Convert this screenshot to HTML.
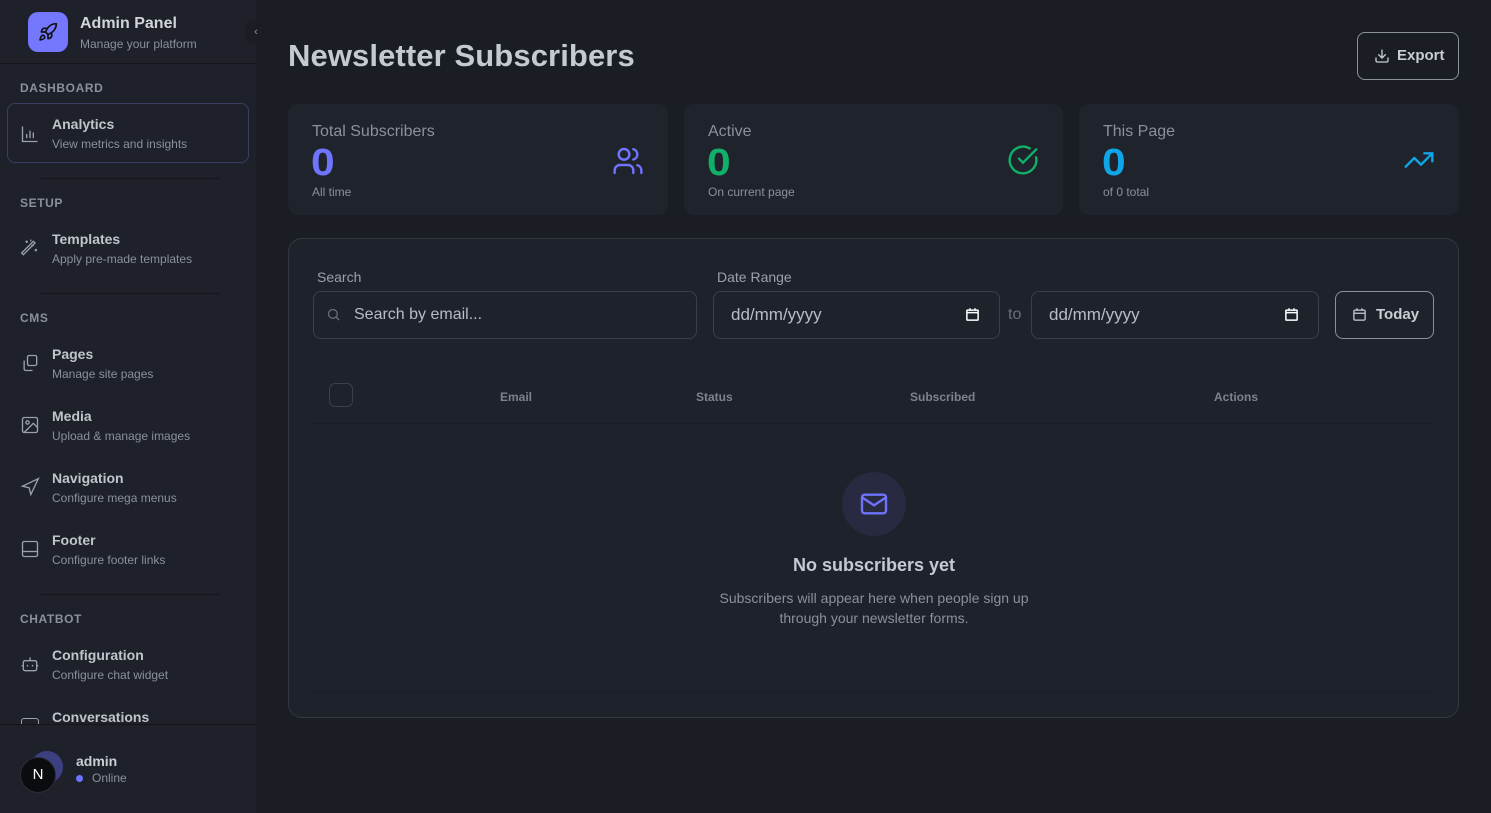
<!DOCTYPE html>
<html><head><meta charset="utf-8"><style>
*{box-sizing:border-box;margin:0;padding:0}
body{width:1491px;height:813px;overflow:hidden;background:#1a1d23;font-family:"Liberation Sans",sans-serif;position:relative;color:#d1d5db}
.a{position:absolute}
.sb{left:0;top:0;width:256px;height:813px;background:#1e2129}
.sec{font-size:12px;font-weight:bold;color:#8b909a;letter-spacing:.6px;left:20px}
.it{left:52px;font-size:14px;font-weight:bold;color:#c0c4cb}
.sub{left:52px;font-size:12px;color:#8b909a}
.ic{left:20px;width:20px;height:20px}
.card{background:#1f232b;border-radius:10px}
.lbl{font-size:16px;color:#8b909a}
.big{font-size:38px;font-weight:bold;transform:scaleX(1.12);transform-origin:left}
.sm{font-size:12px;color:#8b909a}
.inp{border:1px solid #3a3f48;border-radius:8px;background:#1e222a}
.th{font-size:12px;font-weight:bold;color:#7d828c;top:390px}
</style></head><body>
<div class="a sb"></div>
<div class="a" style="left:28px;top:12px;width:40px;height:40px;border-radius:10px;background:#7478ff"></div>
<svg class="a" style="left:38px;top:22px" width="20" height="20" viewBox="0 0 24 24" fill="none" stroke="#111" stroke-width="2" stroke-linecap="round" stroke-linejoin="round"><path d="M4.5 16.5c-1.5 1.26-2 5-2 5s3.74-.5 5-2c.71-.84.7-2.130-.09-2.91a2.18 2.18 0 0 0-2.91-.09z"/><path d="m12 15-3-3a22 22 0 0 1 2-3.95A12.88 12.88 0 0 1 22 2c0 2.72-.78 7.5-6 11a22.350 22.350 0 0 1-4 2z"/><path d="M9 12H4s.55-3.03 2-4c1.62-1.08 5 0 5 0M12 15v5s3.03-.55 4-2c1.08-1.62 0-5 0-5"/></svg>
<div class="a" style="left:80px;top:15px;font-size:16px;font-weight:bold;color:#d1d5db">Admin Panel</div>
<div class="a" style="left:80px;top:37px;font-size:12px;color:#8b909a">Manage your platform</div>
<div class="a" style="left:244px;top:20px;width:24px;height:24px;border-radius:12px;background:#1a1d23;color:#8b909a;font-size:11px;text-align:center;line-height:24px">‹</div>
<div class="a" style="left:0;top:63px;width:256px;height:1px;background:#14161b"></div>

<div class="a sec" style="top:81px">DASHBOARD</div>
<div class="a" style="left:7px;top:103px;width:242px;height:60px;border:1.5px solid #3a3d62;border-radius:8px"></div>
<svg class="a ic" style="top:124px" viewBox="0 0 24 24" fill="none" stroke="#9ca0a8" stroke-width="1.6"><path d="M3 3v18h18M8 17v-5M12 17V8M16 17v-7"/></svg>
<div class="a it" style="top:116px">Analytics</div><div class="a sub" style="top:137px">View metrics and insights</div>
<div class="a" style="left:40px;top:178px;width:180px;height:1px;background:#15171c"></div>

<div class="a sec" style="top:196px">SETUP</div>
<svg class="a ic" style="top:238px" viewBox="0 0 24 24" fill="none" stroke="#9ca0a8" stroke-width="1.6"><path d="M4 20 18 6l-2-2L2 18zM14 8l2 2M8 3v3M6.5 4.5h3M19 13v3M17.5 14.5h3M13 2v2"/></svg>
<div class="a it" style="top:231px">Templates</div><div class="a sub" style="top:252px">Apply pre-made templates</div>
<div class="a" style="left:40px;top:293px;width:180px;height:1px;background:#15171c"></div>

<div class="a sec" style="top:311px">CMS</div>
<svg class="a ic" style="top:353px" viewBox="0 0 24 24" fill="none" stroke="#9ca0a8" stroke-width="1.6"><rect x="9" y="3" width="11" height="12" rx="2"/><path d="M5 9v10a2 2 0 0 0 2 2h8"/></svg>
<div class="a it" style="top:346px">Pages</div><div class="a sub" style="top:367px">Manage site pages</div>
<svg class="a ic" style="top:415px" viewBox="0 0 24 24" fill="none" stroke="#9ca0a8" stroke-width="1.6"><rect x="3" y="3" width="18" height="18" rx="2"/><circle cx="9" cy="9" r="2"/><path d="m21 15-5-5L5 21"/></svg>
<div class="a it" style="top:408px">Media</div><div class="a sub" style="top:429px">Upload &amp; manage images</div>
<svg class="a ic" style="top:477px" viewBox="0 0 24 24" fill="none" stroke="#9ca0a8" stroke-width="1.6"><path d="M3 11 22 2l-9 19-2-8z"/></svg>
<div class="a it" style="top:470px">Navigation</div><div class="a sub" style="top:491px">Configure mega menus</div>
<svg class="a ic" style="top:539px" viewBox="0 0 24 24" fill="none" stroke="#9ca0a8" stroke-width="1.6"><rect x="3" y="3" width="18" height="18" rx="2"/><path d="M3 15h18"/></svg>
<div class="a it" style="top:532px">Footer</div><div class="a sub" style="top:553px">Configure footer links</div>
<div class="a" style="left:40px;top:594px;width:180px;height:1px;background:#15171c"></div>

<div class="a sec" style="top:612px">CHATBOT</div>
<svg class="a ic" style="top:654px" viewBox="0 0 24 24" fill="none" stroke="#9ca0a8" stroke-width="1.6"><rect x="4" y="8" width="16" height="12" rx="2"/><path d="M12 8V4M2 14h2M20 14h2M9 13v2M15 13v2"/></svg>
<div class="a it" style="top:647px">Configuration</div><div class="a sub" style="top:668px">Configure chat widget</div>
<div class="a" style="left:0;top:700px;width:256px;height:24px;overflow:hidden">
<div class="a" style="left:21px;top:18px;width:18px;height:14px;border:1.6px solid #9ca0a8;border-radius:3px"></div>
<div class="a it" style="top:9px;left:52px">Conversations</div></div>
<div class="a" style="left:0;top:724px;width:256px;height:1px;background:#14161b"></div>
<div class="a" style="left:31px;top:751px;width:32px;height:32px;border-radius:16px;background:#3d4080"></div>
<div class="a" style="left:20px;top:757px;width:36px;height:36px;border-radius:18px;background:#0b0c0f;border:1px solid #2a2d33;color:#fff;font-size:15px;text-align:center;line-height:34px">N</div>
<div class="a" style="left:76px;top:753px;font-size:14px;font-weight:bold;color:#c9cdd4">admin</div>
<div class="a" style="left:76px;top:775px;width:7px;height:7px;border-radius:4px;background:#6f74ff"></div>
<div class="a" style="left:92px;top:771px;font-size:12px;color:#8b909a">Online</div>

<div class="a" style="left:288px;top:38px;font-size:31px;font-weight:bold;color:#c5c9d1;letter-spacing:0.1px">Newsletter Subscribers</div>
<div class="a" style="left:1357px;top:32px;width:102px;height:48px;border:1px solid #8b909a;border-radius:8px"></div>
<svg class="a" style="left:1374px;top:48px" width="16" height="16" viewBox="0 0 24 24" fill="none" stroke="#c9cdd4" stroke-width="2" stroke-linecap="round"><path d="M21 15v4a2 2 0 0 1-2 2H5a2 2 0 0 1-2-2v-4M7 10l5 5 5-5M12 15V3"/></svg>
<div class="a" style="left:1397px;top:47px;font-size:15px;font-weight:bold;color:#c9cdd4">Export</div>

<div class="a card" style="left:288px;top:104px;width:380px;height:111px"></div>
<div class="a lbl" style="left:312px;top:123px">Total Subscribers</div>
<div class="a big" style="left:311px;top:142px;color:#6f74ff">0</div>
<div class="a sm" style="left:312px;top:185px">All time</div>
<svg class="a" style="left:612px;top:145px" width="32" height="32" viewBox="0 0 24 24" fill="none" stroke="#6f74ff" stroke-width="1.8" stroke-linecap="round"><path d="M16 21v-2a4 4 0 0 0-4-4H6a4 4 0 0 0-4 4v2"/><circle cx="9" cy="7" r="4"/><path d="M22 21v-2a4 4 0 0 0-3-3.87M16 3.13a4 4 0 0 1 0 7.75"/></svg>

<div class="a card" style="left:684px;top:104px;width:379px;height:111px"></div>
<div class="a lbl" style="left:708px;top:123px">Active</div>
<div class="a big" style="left:707px;top:142px;color:#10b06b">0</div>
<div class="a sm" style="left:708px;top:185px">On current page</div>
<svg class="a" style="left:1007px;top:144px" width="32" height="32" viewBox="0 0 24 24" fill="none" stroke="#10b06b" stroke-width="1.8" stroke-linecap="round"><path d="M21.8 10A10 10 0 1 1 17 3.34"/><path d="m9 11 3 3L22 4"/></svg>

<div class="a card" style="left:1079px;top:104px;width:380px;height:111px"></div>
<div class="a lbl" style="left:1103px;top:123px">This Page</div>
<div class="a big" style="left:1102px;top:142px;color:#0ea5e9">0</div>
<div class="a sm" style="left:1103px;top:185px">of 0 total</div>
<svg class="a" style="left:1403px;top:144px" width="32" height="32" viewBox="0 0 24 24" fill="none" stroke="#0ea5e9" stroke-width="1.8" stroke-linecap="round" stroke-linejoin="round"><path d="m22 7-8.5 8.5-5-5L2 17M16 7h6v6"/></svg>

<div class="a" style="left:288px;top:238px;width:1171px;height:480px;border:1px solid #33373f;border-radius:14px;background:#1e222a"></div>
<div class="a" style="left:317px;top:269px;font-size:14px;color:#9ca0a8">Search</div>
<div class="a inp" style="left:313px;top:291px;width:384px;height:48px"></div>
<svg class="a" style="left:326px;top:307px" width="15" height="15" viewBox="0 0 24 24" fill="none" stroke="#6b7079" stroke-width="2"><circle cx="11" cy="11" r="7"/><path d="m21 21-5-5"/></svg>
<div class="a" style="left:354px;top:306px;font-size:16px;color:#b8bcc4">Search by email...</div>
<div class="a" style="left:717px;top:269px;font-size:14px;color:#9ca0a8">Date Range</div>
<div class="a inp" style="left:713px;top:291px;width:287px;height:48px"></div>
<div class="a" style="left:731px;top:305px;font-size:17px;color:#b8bcc4">dd/mm/yyyy</div>
<svg class="a" style="left:965px;top:307px" width="15" height="15" viewBox="0 0 24 24" fill="none" stroke="#fff" stroke-width="2.4"><rect x="3" y="5" width="18" height="16" rx="1"/><path d="M3 9h18M8 2v4M16 2v4"/></svg>
<div class="a" style="left:1008px;top:306px;font-size:16px;color:#6b7079">to</div>
<div class="a inp" style="left:1031px;top:291px;width:288px;height:48px"></div>
<div class="a" style="left:1049px;top:305px;font-size:17px;color:#b8bcc4">dd/mm/yyyy</div>
<svg class="a" style="left:1284px;top:307px" width="15" height="15" viewBox="0 0 24 24" fill="none" stroke="#fff" stroke-width="2.4"><rect x="3" y="5" width="18" height="16" rx="1"/><path d="M3 9h18M8 2v4M16 2v4"/></svg>
<div class="a" style="left:1335px;top:291px;width:99px;height:48px;border:1px solid #8b909a;border-radius:8px"></div>
<svg class="a" style="left:1352px;top:307px" width="15" height="15" viewBox="0 0 24 24" fill="none" stroke="#c9cdd4" stroke-width="2"><rect x="3" y="5" width="18" height="16" rx="2"/><path d="M3 10h18M8 2v4M16 2v4"/></svg>
<div class="a" style="left:1376px;top:306px;font-size:15px;font-weight:bold;color:#c9cdd4">Today</div>

<div class="a" style="left:329px;top:383px;width:24px;height:24px;border:1px solid #3a3f48;border-radius:6px"></div>
<div class="a th" style="left:500px">Email</div>
<div class="a th" style="left:696px">Status</div>
<div class="a th" style="left:910px">Subscribed</div>
<div class="a th" style="left:1214px">Actions</div>
<div class="a" style="left:313px;top:423px;width:1121px;height:1px;background:#1a1d23"></div>
<div class="a" style="left:313px;top:692px;width:1121px;height:1px;background:#1a1d23"></div>

<div class="a" style="left:842px;top:472px;width:64px;height:64px;border-radius:32px;background:#272a40"></div>
<svg class="a" style="left:858px;top:488px" width="32" height="32" viewBox="0 0 24 24" fill="none" stroke="#6f74ff" stroke-width="1.8"><rect x="3" y="5" width="18" height="14" rx="2"/><path d="m3 7 9 6 9-6"/></svg>
<div class="a" style="left:674px;top:555px;width:400px;text-align:center;font-size:18px;font-weight:bold;color:#c5c9d1">No subscribers yet</div>
<div class="a" style="left:674px;top:588px;width:400px;text-align:center;font-size:14px;line-height:20px;color:#8b909a">Subscribers will appear here when people sign up<br>through your newsletter forms.</div>
</body></html>
